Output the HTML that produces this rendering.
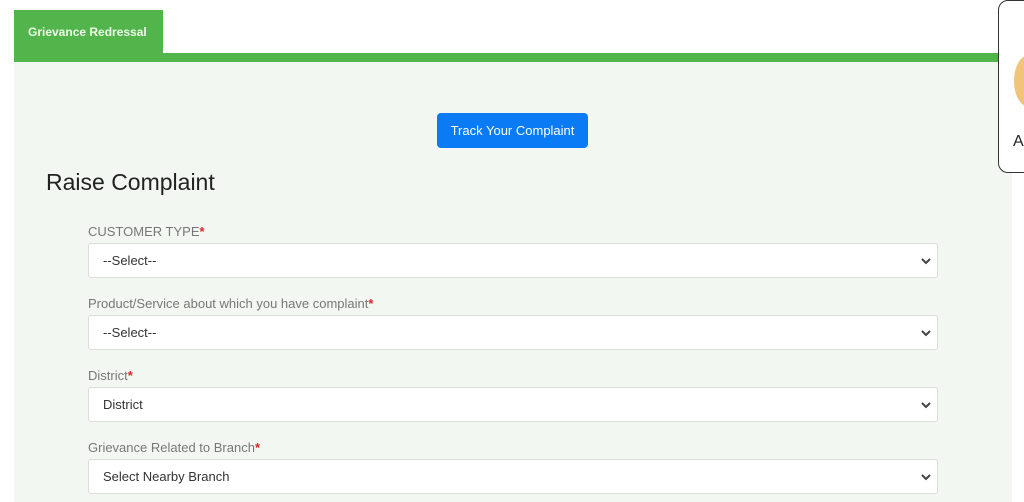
<!DOCTYPE html>
<html><head><meta charset="utf-8"><style>
*{margin:0;padding:0;box-sizing:border-box}
body{width:1024px;height:502px;overflow:hidden;background:#fff;font-family:"Liberation Sans",sans-serif;position:relative}
.tab{position:absolute;left:14px;top:10px;width:149px;height:44px;background:#52b54c;color:#eef9ea;font-size:12px;font-weight:bold;padding:15px 0 0 14px}
.bar{position:absolute;left:14px;top:53px;width:990px;height:9px;background:#52b54c}
.panel{position:absolute;left:14px;top:62px;width:998px;height:440px;background:#f2f8f1}
.btn{position:absolute;left:437px;top:113px;width:151px;height:35px;background:#0a7bf5;border-radius:4px;color:#fff;font-size:13px;text-align:center;line-height:35px}
h1{position:absolute;left:46px;top:169px;font-weight:normal;font-size:23px;color:#222}
.lbl{position:absolute;left:88px;font-size:13px;color:#777}
.lbl b{color:#d9232e}
.sel{position:absolute;left:88px;width:850px;height:35px;background:#fff;border:1px solid #dcdcdc;border-radius:3px;font-size:13px;color:#333;padding:9px 0 0 14px}
.sel svg{position:absolute;right:6px;top:13px}
.pop{position:absolute;left:998px;top:0px;width:60px;height:173px;border:1px solid #333;border-radius:10px;background:#fff}
.egg{position:absolute;left:1014px;top:55px;width:30px;height:52px;border-radius:50%;background:#f2c47a}
.pa{position:absolute;left:1013px;top:133px;font-size:16px;color:#222}
</style></head><body>
<div class="tab">Grievance Redressal</div>
<div class="bar"></div>
<div class="panel"></div>
<div class="btn">Track Your Complaint</div>
<h1>Raise Complaint</h1>
<div class="lbl" style="top:224px">CUSTOMER TYPE<b>*</b></div>
<div class="sel" style="top:243px">--Select--<svg width="10" height="8" viewBox="0 0 10 8"><path d="M1 2l4 4 4-4" fill="none" stroke="#444" stroke-width="2"/></svg></div>
<div class="lbl" style="top:296px">Product/Service about which you have complaint<b>*</b></div>
<div class="sel" style="top:315px">--Select--<svg width="10" height="8" viewBox="0 0 10 8"><path d="M1 2l4 4 4-4" fill="none" stroke="#444" stroke-width="2"/></svg></div>
<div class="lbl" style="top:368px">District<b>*</b></div>
<div class="sel" style="top:387px">District<svg width="10" height="8" viewBox="0 0 10 8"><path d="M1 2l4 4 4-4" fill="none" stroke="#444" stroke-width="2"/></svg></div>
<div class="lbl" style="top:440px">Grievance Related to Branch<b>*</b></div>
<div class="sel" style="top:459px">Select Nearby Branch<svg width="10" height="8" viewBox="0 0 10 8"><path d="M1 2l4 4 4-4" fill="none" stroke="#444" stroke-width="2"/></svg></div>
<div class="pop"></div>
<div class="egg"></div>
<div class="pa">A</div>
</body></html>
